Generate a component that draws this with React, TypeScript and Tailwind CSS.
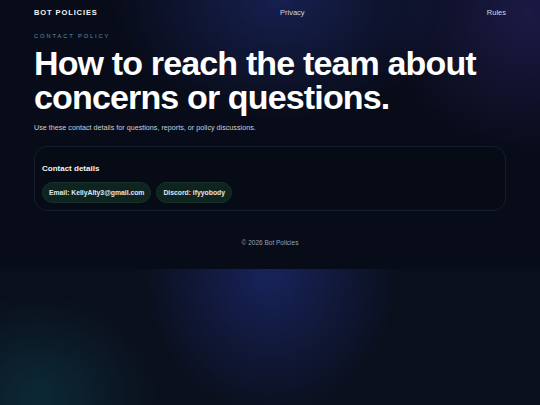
export default function App() {
  return (
    <div className="min-h-screen flex flex-col bg-[#0a0f1c] font-['Liberation_Sans',Arial,sans-serif]">
      {/* Top section */}
      <div className="bg-[#080c18] bg-[radial-gradient(ellipse_170px_120px_at_52%_0%,rgba(34,48,125,0.55),transparent),radial-gradient(ellipse_150px_140px_at_98%_5%,rgba(40,34,100,0.6),transparent)]">
        <header className="flex items-center justify-between px-[34px] pt-[7px]">
          <span className="text-[7.5px] font-bold tracking-[0.12em] text-gray-100">BOT POLICIES</span>
          <a className="text-[7.5px] text-gray-300">Privacy</a>
          <a className="text-[7.5px] text-gray-300">Rules</a>
        </header>

        <main className="px-[34px] pt-[14px]">
          <div className="text-[5.8px] tracking-[0.32em] text-[#5f8fb1]">CONTACT POLICY</div>
          <h1 className="mt-[5px] text-[34px] font-bold leading-[1.01] tracking-[-0.025em] text-white">
            How to reach the team about concerns or questions.
          </h1>
          <p className="mt-[8px] text-[7.2px] text-[#c9ced8]">
            Use these contact details for questions, reports, or policy discussions.
          </p>

          <section className="mt-[13px] rounded-[13px] border border-[#161d2e] bg-[#070b15]/60 px-[7px] pt-[16px] pb-[7px]">
            <h2 className="text-[8px] font-bold text-gray-100">Contact details</h2>
            <div className="mt-[7px] flex gap-[5px]">
              <span className="h-[21px] flex items-center rounded-full border border-[#183229] bg-[#0d2420] px-[6px] text-[6.8px] font-bold text-[#e5e7eb]">
                Email: KellyAlty3@gmail.com
              </span>
              <span className="h-[21px] flex items-center rounded-full border border-[#183229] bg-[#0d2420] px-[6px] text-[6.8px] font-bold text-[#e5e7eb]">
                Discord: ifyyobody
              </span>
            </div>
          </section>
        </main>

        <footer className="pt-[27px] pb-[21px] text-center text-[6.5px] text-gray-400">© 2026 Bot Policies</footer>
      </div>

      {/* Page background below */}
      <div className="flex-1 bg-[radial-gradient(ellipse_130px_150px_at_50%_0%,rgba(32,46,125,0.65),transparent),radial-gradient(ellipse_120px_100px_at_7%_92%,rgba(14,62,75,0.55),transparent)]" />
    </div>
  )
}
